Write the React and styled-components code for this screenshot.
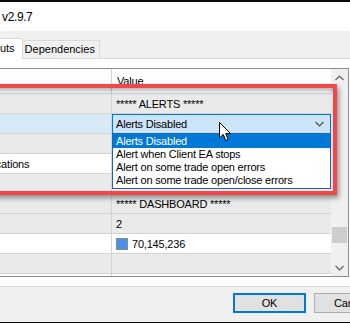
import React from 'react';
import styled, { createGlobalStyle } from 'styled-components';

const Global = createGlobalStyle`
  html, body { margin: 0; padding: 0; background: #0b0b0b; }
  body { font-family: "Liberation Sans", Arial, sans-serif; font-size: 11px; color: #000; }
  * { box-sizing: border-box; }
`;

const Page = styled.div`
  position: relative;
  width: 350px;
  height: 323px;
  overflow: hidden;
  background: #0b0b0b;
`;

const Dialog = styled.div`
  margin: 2px 0 0 -100px;
  width: 576px;
  height: 320px;
  display: flex;
  flex-direction: column;
  background: #f0f0f0;
`;

const TitleBar = styled.div`
  height: 29px;
  flex: none;
  display: flex;
  align-items: center;
  padding-left: 35px;
  background: #fff;
  font-size: 12px;
  letter-spacing: -0.4px;
  white-space: nowrap;
`;

const Client = styled.div`
  flex: 1;
  display: flex;
  flex-direction: column;
  padding: 7px 8px 0 8px;
`;

const TabStrip = styled.div`
  position: relative;
  z-index: 2;
  height: 21px;
  display: flex;
  align-items: flex-end;
  padding-left: 17px;
  white-space: nowrap;
`;

const Tab = styled.div`
  position: relative;
  height: ${p => (p.$active ? '21px' : '18px')};
  margin: ${p => (p.$active ? '0 -2px 0 -2px' : '0 0 1px -1px')};
  z-index: ${p => (p.$active ? 2 : 1)};
  padding: ${p => (p.$active ? '0 7px' : '0 4px')};
  line-height: ${p => (p.$active ? '19px' : '17px')};
  background: ${p => (p.$active ? '#fff' : '#f0f0f0')};
  border: 1px solid #d9d9d9;
  border-bottom: none;
`;

const Panel = styled.div`
  position: relative;
  z-index: 1;
  margin-top: -1px;
  background: #fff;
  border: 1px solid #d9d9d9;
  padding: 9px 8px 9px 8px;
  display: flex;
`;

const Grid = styled.div`
  width: 432px;
  height: 209px;
  border: 1px solid #8c8c8c;
  display: flex;
  overflow: hidden;
`;

const ListArea = styled.div`
  flex: 1;
  min-width: 0;
  display: flex;
  flex-direction: column;
  letter-spacing: -0.2px;
  white-space: nowrap;
`;

const Row = styled.div`
  flex: none;
  height: ${p => (p.$header ? '25px' : '20px')};
  display: grid;
  grid-template-columns: 194px 1fr;
  border-bottom: 1px solid #d3d3d3;
  background: ${p => p.$bg || '#fff'};
`;

const NameCell = styled.div`
  display: flex;
  align-items: center;
  padding-left: 5px;
  border-right: 1px solid #d3d3d3;
  background: ${p => p.$bg || 'transparent'};
  overflow: hidden;
`;

const ValueCell = styled.div`
  position: relative;
  display: flex;
  align-items: center;
  gap: 4px;
  padding-left: ${p => (p.$header ? '5px' : '4px')};
  min-width: 0;
`;

const Combo = styled.div`
  position: absolute;
  z-index: 3;
  left: 0;
  right: 0;
  top: 0;
  height: 20px;
  display: flex;
  align-items: center;
  justify-content: space-between;
  padding: 0 6px 0 3px;
  background: #cce4f7;
  border: 1px solid #0078d7;
`;

const DropList = styled.div`
  position: absolute;
  left: -1px;
  right: -1px;
  top: 100%;
  background: #fff;
  border: 1px solid #1c64ad;
  padding-bottom: 1px;
`;

const DropItem = styled.div`
  height: ${p => (p.$first ? '14px' : '13px')};
  line-height: ${p => (p.$first ? '14px' : '13px')};
  padding-left: 3px;
  background: ${p => (p.$active ? '#0078d7' : '#fff')};
  color: ${p => (p.$active ? '#fff' : '#000')};
`;

const Swatch = styled.span`
  width: 12px;
  height: 12px;
  flex: none;
  background: ${p => p.$color};
  border: 1px solid #8a8a8a;
`;

const ScrollBar = styled.div`
  width: 17px;
  flex: none;
  display: flex;
  flex-direction: column;
  background: #f0f0f0;
`;

const ScrollBtn = styled.div`
  height: 17px;
  flex: none;
  display: flex;
  align-items: center;
  justify-content: center;
`;

const ScrollTrack = styled.div`
  flex: 1;
  display: flex;
  flex-direction: column;
  align-items: center;
`;

const Thumb = styled.div`
  width: 15px;
  height: 16px;
  margin-top: ${p => p.$offset}px;
  background: #cdcdcd;
`;

const ButtonRow = styled.div`
  display: flex;
  justify-content: flex-end;
  gap: 8px;
  margin-top: 6px;
  letter-spacing: -0.2px;
`;

const Button = styled.div`
  width: 73px;
  height: 20px;
  display: flex;
  align-items: center;
  justify-content: center;
  background: #e1e1e1;
  border: ${p => (p.$default ? '2px solid #0078d7' : '1px solid #adadad')};
`;

const Highlight = styled.div`
  position: absolute;
  z-index: 5;
  left: -10px;
  top: 84px;
  width: 347px;
  height: 111px;
  border: 4px solid #f2474a;
  box-shadow: 2px 3px 5px rgba(0, 0, 0, 0.4), inset 1px 3px 5px rgba(0, 0, 0, 0.3);
  pointer-events: none;
`;

const Cursor = styled.svg`
  position: absolute;
  z-index: 6;
  left: 219px;
  top: 122px;
`;

const Chevron = ({ up, color = '#606060' }) => (
  <svg width="9" height="6" viewBox="0 0 9 6">
    <polyline
      points={up ? '0.5,5 4.5,1 8.5,5' : '0.5,1 4.5,5 8.5,1'}
      fill="none"
      stroke={color}
      strokeWidth="1.2"
    />
  </svg>
);

const GRAY = '#eaeaea';

const rows = [
  { name: 'Alerts', value: '***** ALERTS *****', bg: GRAY },
  { name: 'Alert mode', combo: true, bg: '#fff', nameBg: '#d8e9f8' },
  { name: 'Pop-up alerts', value: '', bg: GRAY },
  { name: 'Use Push Notifications', value: '', bg: '#fff' },
  { name: 'Send e-mails', value: '', bg: GRAY },
  { name: 'Dashboard', value: '***** DASHBOARD *****', bg: GRAY },
  { name: 'Font size', value: '2', bg: GRAY },
  { name: 'Header colour', value: '70,145,236', color: 'rgb(70,145,236)', bg: '#fff' },
  { name: 'Text colour', value: '', bg: GRAY },
  { name: 'Spacing', value: '', bg: '#fff' },
];

const options = [
  'Alerts Disabled',
  'Alert when Client EA stops',
  'Alert on some trade open errors',
  'Alert on some trade open/close errors',
];

export default function App() {
  return (
    <Page>
      <Global />
      <Dialog>
        <TitleBar>Copier Client v2.9.7</TitleBar>
        <Client>
          <TabStrip>
            <Tab>Common</Tab>
            <Tab $active>Inputs</Tab>
            <Tab>Dependencies</Tab>
          </TabStrip>
          <Panel>
            <Grid>
              <ListArea>
                <Row $header>
                  <NameCell>Variable</NameCell>
                  <ValueCell $header>Value</ValueCell>
                </Row>
                {rows.map((r, i) => (
                  <Row key={i} $bg={r.bg}>
                    <NameCell $bg={r.nameBg}>{r.name}</NameCell>
                    <ValueCell>
                      {r.combo ? (
                        <Combo>
                          <span>Alerts Disabled</span>
                          <Chevron color="#505050" />
                          <DropList>
                            {options.map((o, j) => (
                              <DropItem key={j} $first={j === 0} $active={j === 0}>
                                {o}
                              </DropItem>
                            ))}
                          </DropList>
                        </Combo>
                      ) : (
                        <>
                          {r.color && <Swatch $color={r.color} />}
                          {r.value}
                        </>
                      )}
                    </ValueCell>
                  </Row>
                ))}
              </ListArea>
              <ScrollBar>
                <ScrollBtn>
                  <Chevron up />
                </ScrollBtn>
                <ScrollTrack>
                  <Thumb $offset={141} />
                </ScrollTrack>
                <ScrollBtn>
                  <Chevron />
                </ScrollBtn>
              </ScrollBar>
            </Grid>
          </Panel>
          <ButtonRow>
            <Button $default>OK</Button>
            <Button>Cancel</Button>
            <Button>Reset</Button>
          </ButtonRow>
        </Client>
      </Dialog>
      <Highlight />
      <Cursor width="13" height="20" viewBox="0 0 13 20">
        <path
          d="M0.5 0.5 L0.5 16 L4.2 12.4 L6.8 18.6 L9.2 17.6 L6.7 11.6 L11.6 11.6 Z"
          fill="#fff"
          stroke="#000"
          strokeWidth="1"
          strokeLinejoin="round"
        />
      </Cursor>
    </Page>
  );
}
